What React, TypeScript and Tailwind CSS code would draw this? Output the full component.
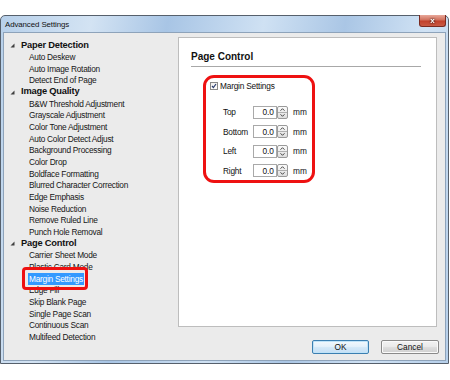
import React from "react";

const tree: { t: string; h?: boolean; sel?: boolean }[] = [
  { t: "Paper Detection", h: true },
  { t: "Auto Deskew" },
  { t: "Auto Image Rotation" },
  { t: "Detect End of Page" },
  { t: "Image Quality", h: true },
  { t: "B&W Threshold Adjustment" },
  { t: "Grayscale Adjustment" },
  { t: "Color Tone Adjustment" },
  { t: "Auto Color Detect Adjust" },
  { t: "Background Processing" },
  { t: "Color Drop" },
  { t: "Boldface Formatting" },
  { t: "Blurred Character Correction" },
  { t: "Edge Emphasis" },
  { t: "Noise Reduction" },
  { t: "Remove Ruled Line" },
  { t: "Punch Hole Removal" },
  { t: "Page Control", h: true },
  { t: "Carrier Sheet Mode" },
  { t: "Plastic Card Mode" },
  { t: "Margin Settings", sel: true },
  { t: "Edge Fill" },
  { t: "Skip Blank Page" },
  { t: "Single Page Scan" },
  { t: "Continuous Scan" },
  { t: "Multifeed Detection" },
];

function Arrow() {
  return (
    <svg width="5" height="5" viewBox="0 0 5 5" className="shrink-0">
      <polygon points="4.5,0.5 4.5,4.5 0.5,4.5" fill="#404040" />
    </svg>
  );
}

function Spinner() {
  return (
    <div className="w-[11px] h-[13px] flex flex-col border border-[#9a9a9a] rounded-[2px] bg-[linear-gradient(#fbfbfb,#dedede)]">
      <div className="flex-1 flex items-center justify-center border-b border-[#b0b0b0]">
        <svg width="5" height="3" viewBox="0 0 5 3">
          <polyline points="0.5,2.7 2.5,0.7 4.5,2.7" fill="none" stroke="#333" strokeWidth="0.9" />
        </svg>
      </div>
      <div className="flex-1 flex items-center justify-center">
        <svg width="5" height="3" viewBox="0 0 5 3">
          <polyline points="0.5,0.3 2.5,2.3 4.5,0.3" fill="none" stroke="#333" strokeWidth="0.9" />
        </svg>
      </div>
    </div>
  );
}

function MarginRow({ label }: { label: string }) {
  return (
    <div className="flex items-center h-[13px]">
      <div className="w-[30px] pl-[17px] box-content text-[8.3px] tracking-[-0.2px] text-[#111] leading-none">{label}</div>
      <div className="w-[24px] h-[13px] border border-[#a9a9a9] bg-white flex items-center justify-end pr-[2px] text-[8.3px] text-[#111] leading-none">
        0.0
      </div>
      <Spinner />
      <div className="ml-[5px] text-[8.3px] text-[#111] leading-none">mm</div>
    </div>
  );
}

export default function App() {
  return (
    <div className="w-[450px] h-[380px] bg-white font-['Liberation_Sans',Arial,sans-serif] overflow-hidden">
      <div className="h-[15px]" />
      <div className="w-[449px] h-[349px] rounded-t-[5px] border border-[#56606c] bg-[linear-gradient(100deg,#b7d0ea_0%,#d3e3f3_18%,#a8c5e5_33%,#cfe1f3_52%,#aac6e5_68%,#d0e2f4_84%,#b6cfea_100%)] flex flex-col">
        <div className="h-[16px] flex items-start justify-between pl-[4px] pr-[2px]">
          <div className="text-[7.9px] tracking-[-0.1px] text-[#111] leading-none mt-[5px]">Advanced Settings</div>
          <div className="-mt-[1px] w-[27px] h-[12px] rounded-b-[3px] border border-[#7a2a20] border-t-0 bg-[linear-gradient(#e8a89a,#d0705c_45%,#c2412c_55%,#c95a44)] flex items-center justify-center">
            <span className="text-white text-[8px] font-bold leading-none drop-shadow-[0_0_1px_#000]">x</span>
          </div>
        </div>
        <div className="mx-[2px] mb-[2px] flex-1 border border-[#8ea3ba] bg-[#ebebeb] flex">
          <div className="relative w-[174px] shrink-0 pt-[6.5px]">
            {tree.map((it, i) =>
              it.h ? (
                <div key={i} className="h-[11.68px] flex items-center pl-[6px]">
                  <Arrow />
                  <span className="ml-[6px] text-[9.3px] font-bold tracking-[-0.2px] text-[#111] leading-none">{it.t}</span>
                </div>
              ) : (
                <div key={i} className="h-[11.68px] flex items-center pl-[24px]">
                  {it.sel ? (
                    <span className="bg-[#3399ff] text-white text-[8.3px] tracking-[-0.25px] leading-[12px] px-[1px]">{it.t}</span>
                  ) : (
                    <span className="text-[8.3px] tracking-[-0.25px] text-[#161616] leading-none pl-[1px]">{it.t}</span>
                  )}
                </div>
              )
            )}
            <div className="absolute left-[18px] top-[234px] w-[66px] h-[23px] border-[3px] border-[#ee1111] rounded-[4px]" />
          </div>
          <div className="flex-1 flex flex-col">
            <div className="mt-[4px] mr-[8px] h-[290px] border border-[#bdbdbd] bg-white flex flex-col pl-[12px]">
              <div className="h-[28px] flex items-end pb-[4px]">
                <span className="text-[10px] font-bold text-[#111] leading-none">Page Control</span>
              </div>
              <div className="h-[1px] bg-[#a8a8a8] mr-[15px]" />
              <div className="ml-[12px] mt-[8px] w-[112px] h-[108px] border-[3px] border-[#ee1111] rounded-[11px] flex flex-col">
                <div className="flex items-center mt-[4px] ml-[4px] h-[8px]">
                  <div className="w-[8px] h-[8px] border border-[#8a8a8a] bg-[linear-gradient(#f0f0f0,#fff)] flex items-center justify-center">
                    <svg width="6" height="6" viewBox="0 0 6 6">
                      <polyline points="1,3 2.4,4.6 5,1" fill="none" stroke="#2a3c6e" strokeWidth="1.2" />
                    </svg>
                  </div>
                  <span className="ml-[2px] text-[8.3px] tracking-[-0.2px] text-[#111] leading-none">Margin Settings</span>
                </div>
                <div className="mt-[16px] flex flex-col gap-[6.4px]">
                  <MarginRow label="Top" />
                  <MarginRow label="Bottom" />
                  <MarginRow label="Left" />
                  <MarginRow label="Right" />
                </div>
              </div>
            </div>
            <div className="mt-[13px] mr-[6px] flex justify-end gap-[12px]">
              <div className="w-[57px] h-[14px] rounded-[2px] border border-[#3c7fb1] bg-[linear-gradient(#f2f9fd,#e5f1fb_45%,#d3e8f8_55%,#c6e0f5)] shadow-[inset_0_0_0_1px_#bfe3f8] flex items-center justify-center text-[8.3px] text-[#111] leading-none">
                OK
              </div>
              <div className="w-[58px] h-[14px] rounded-[2px] border border-[#8a8a8a] bg-[linear-gradient(#f2f2f2,#ebebeb_45%,#dddddd_55%,#cfcfcf)] shadow-[inset_0_0_0_1px_#fafafa] flex items-center justify-center text-[8.3px] text-[#111] leading-none">
                Cancel
              </div>
            </div>
          </div>
        </div>
      </div>
    </div>
  );
}
